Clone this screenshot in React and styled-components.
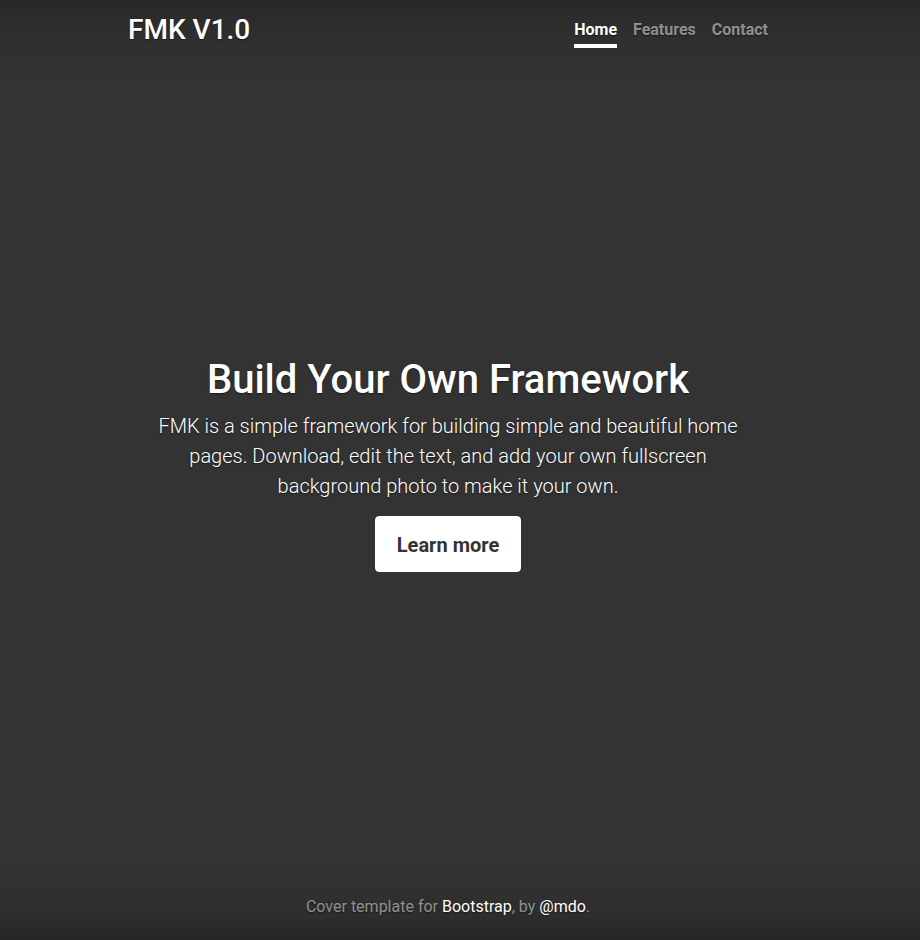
import React from 'react'
import styled, { createGlobalStyle } from 'styled-components'

const GlobalStyle = createGlobalStyle`
  html, body {
    margin: 0;
    padding: 0;
    height: 100%;
  }
  body {
    background:
      linear-gradient(
        to bottom,
        rgba(0, 0, 0, 0.25) 0,
        rgba(0, 0, 0, 0.1) 25px,
        rgba(0, 0, 0, 0) 80px,
        rgba(0, 0, 0, 0) calc(100% - 80px),
        rgba(0, 0, 0, 0.1) calc(100% - 25px),
        rgba(0, 0, 0, 0.25) 100%
      ),
      #333;
    color: #fff;
    font-family: Roboto, "Liberation Sans", sans-serif;
    font-size: 16px;
    line-height: 1.5;
    text-shadow: 0 0.05rem 0.1rem rgba(0, 0, 0, 0.5);
  }
  #root {
    height: 100%;
  }
`

const Page = styled.div`
  height: 100%;
  min-height: 940px;
  box-sizing: border-box;
  padding-right: 24px;
  display: flex;
`

const Cover = styled.div`
  width: 640px;
  margin: 0 auto;
  display: flex;
  flex-direction: column;
`

const Masthead = styled.header`
  height: 48px;
  padding-top: 13px;
  box-sizing: border-box;
  display: flex;
  justify-content: space-between;
  align-items: flex-start;
`

const Brand = styled.h3`
  margin: 0;
  font-size: 28px;
  font-weight: 500;
  line-height: 34px;
`

const Nav = styled.nav`
  display: flex;
  gap: 16px;
`

const NavLink = styled.a`
  display: block;
  padding: 5px 0 2px;
  font-weight: 700;
  line-height: 24px;
  text-decoration: none;
  color: ${p => (p.$active ? '#fff' : 'rgba(255, 255, 255, 0.5)')};
  border-bottom: 4px solid ${p => (p.$active ? '#fff' : 'transparent')};
  cursor: pointer;
`

const Main = styled.main`
  flex: 1;
  display: flex;
  flex-direction: column;
  align-items: center;
  justify-content: center;
  text-align: center;
`

const Heading = styled.h1`
  margin: 0 0 7px;
  font-size: 40px;
  font-weight: 500;
  line-height: 48px;
`

const Lead = styled.p`
  max-width: 600px;
  margin: 0 0 15px;
  font-size: 20px;
  font-weight: 300;
  line-height: 30px;
`

const Button = styled.a`
  display: inline-block;
  padding: 13px 20.5px 11px;
  font-size: 20px;
  font-weight: 700;
  line-height: 30px;
  color: #333;
  background: #fff;
  border: 1px solid #fff;
  border-radius: 4px;
  text-shadow: none;
  text-decoration: none;
  cursor: pointer;
`

const Footer = styled.footer`
  padding: 15px 0 21px;
  text-align: center;
  color: rgba(255, 255, 255, 0.5);
`

const FootLink = styled.a`
  color: #fff;
  text-decoration: none;
`

const App = () => (
  <>
    <GlobalStyle />
    <Page>
      <Cover>
        <Masthead>
          <Brand>FMK V1.0</Brand>
          <Nav>
            <NavLink $active>Home</NavLink>
            <NavLink>Features</NavLink>
            <NavLink>Contact</NavLink>
          </Nav>
        </Masthead>
        <Main>
          <Heading>Build Your Own Framework</Heading>
          <Lead>
            FMK is a simple framework for building simple and beautiful home pages. Download, edit
            the text, and add your own fullscreen background photo to make it your own.
          </Lead>
          <Button>Learn more</Button>
        </Main>
        <Footer>
          Cover template for <FootLink>Bootstrap</FootLink>, by <FootLink>@mdo</FootLink>.
        </Footer>
      </Cover>
    </Page>
  </>
)

export default App
